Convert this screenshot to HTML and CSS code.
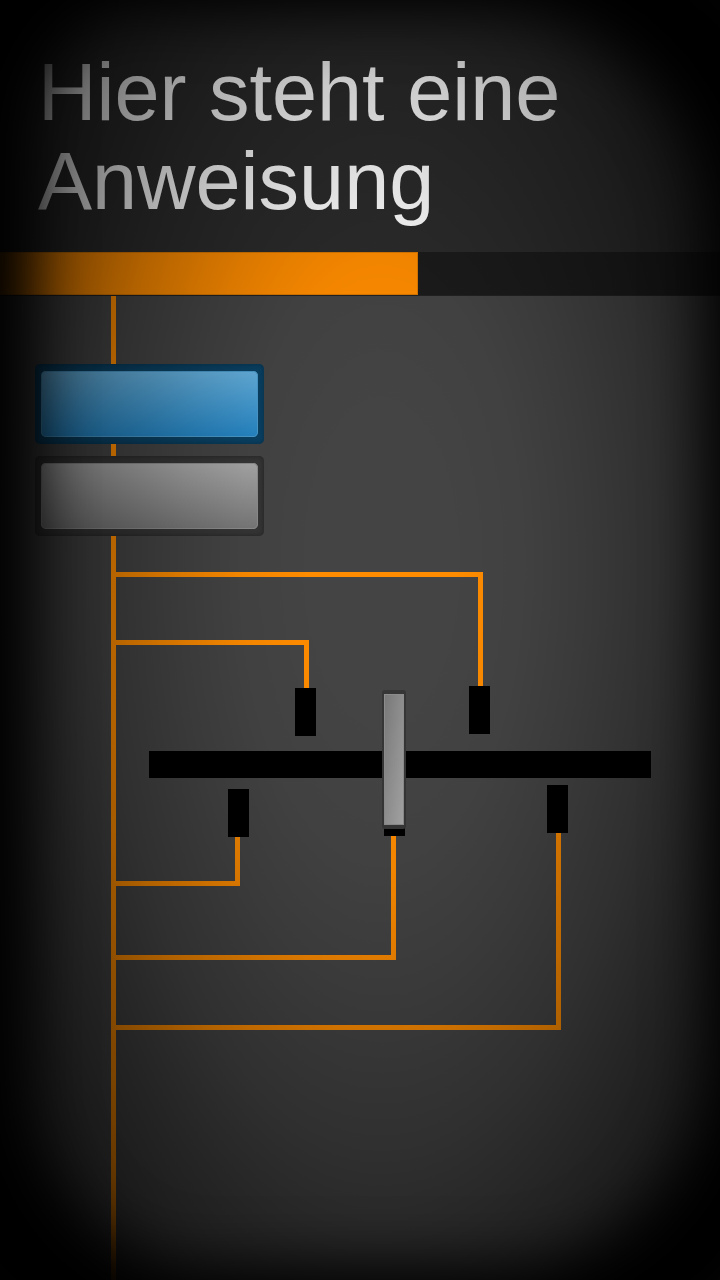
FILE: index.html
```html
<!DOCTYPE html>
<html lang="de">
<head>
<meta charset="utf-8">
<meta name="viewport" content="width=device-width, initial-scale=1">
<title>Anweisung</title>
<link rel="stylesheet" href="styles.css">
</head>
<body>
<div class="screen">
  <header class="header">
    <h1 class="title">Hier steht eine Anweisung</h1>
  </header>
  <progress class="timer" value="58" max="100" aria-label="Zeit"></progress>
  <main class="board">
    <svg class="wires" viewBox="0 0 720 984" preserveAspectRatio="none" aria-hidden="true">
      <g fill="none" stroke="#ff8c00" stroke-width="5">
        <path d="M113.500 0V984"/>
        <path d="M113 278.500H480.500V390"/>
        <path d="M113 346.500H306.500V392"/>
        <path d="M113 587.500H237.500V540"/>
        <path d="M113 661.500H393.500V539"/>
        <path d="M113 731.500H558.500V536"/>
      </g>
      <g fill="#000">
        <rect x="469" y="390" width="21" height="48"/>
        <rect x="295" y="392" width="21" height="48"/>
        <rect x="228" y="493" width="21" height="48"/>
        <rect x="384" y="492" width="21" height="48"/>
        <rect x="547" y="489" width="21" height="48"/>
      </g>
    </svg>
    <div class="buttons">
      <button class="button button-blue" type="button" aria-label="Blau"><span class="face"></span></button>
      <button class="button button-gray" type="button" aria-label="Grau"><span class="face"></span></button>
    </div>
    <div class="slider-row">
      <input class="slider" type="range" min="0" max="80" value="39" aria-label="Stufe">
    </div>
  </main>
  <div class="vignette"></div>
</div>
</body>
</html>
```

FILE: styles.css
```css
* {
  box-sizing: border-box;
}

body {
  margin: 0;
  background: #000;
  font-family: "Liberation Sans", Arial, sans-serif;
}

.screen {
  position: relative;
  display: flex;
  flex-direction: column;
  min-height: 100vh;
  overflow: hidden;
  background: #444;
}

.header {
  padding: 48px 38px 26px;
  background: #2b2b2b;
}

.title {
  margin: 0;
  color: #fff;
  font-size: 81px;
  font-weight: 400;
  line-height: 89px;
}

.timer {
  appearance: none;
  display: block;
  width: 100%;
  height: 44px;
  border: 0;
  background: #1b1b1b;
}

.timer::-webkit-progress-bar {
  background: #1b1b1b;
  border-bottom: 1px solid #222;
}

.timer::-webkit-progress-value {
  background: #ff8c00;
  border: 1px solid #d87700;
  border-left: 0;
}

.board {
  position: relative;
  flex: 1;
  padding-top: 68px;
}

.wires {
  position: absolute;
  inset: 0;
  width: 100%;
  height: 984px;
}

.buttons {
  position: relative;
  display: flex;
  flex-direction: column;
  gap: 12px;
  width: 264px;
  padding-left: 35px;
}

.button {
  display: flex;
  height: 80px;
  padding: 7px 6px;
  border: 0;
  border-radius: 5px;
}

.face {
  flex: 1;
  align-self: stretch;
  border-radius: 5px;
}

.button-blue {
  background: #0a4163;
  box-shadow: inset 0 0 4px #07304a;
}

.button-blue .face {
  background: linear-gradient(#66b2e0, #2485c4);
  box-shadow: inset 0 0 0 1px #4b9acb;
}

.button-gray {
  background: #353535;
  box-shadow: inset 0 0 4px #252525;
}

.button-gray .face {
  background: linear-gradient(#a8a8a8, #787878);
  box-shadow: inset 0 0 0 1px #8c8c8c;
}

.slider-row {
  position: relative;
  display: grid;
  grid-template-columns: 149fr 502fr 69fr;
  margin-top: 154px;
}

.slider {
  appearance: none;
  grid-column: 2;
  width: 100%;
  height: 139px;
  margin: 0;
  background: linear-gradient(#000, #000) 0 61px / 100% 27px no-repeat;
}

.slider::-webkit-slider-thumb {
  appearance: none;
  width: 24px;
  height: 139px;
  border: solid #363636;
  border-width: 4px 2px;
  border-radius: 3px;
  background: linear-gradient(100deg, #777, #a8a8a8) padding-box, #363636;
  box-shadow: inset 0 0 0 1px #8c8c8c;
}

.vignette {
  position: absolute;
  inset: 0;
  overflow: hidden;
  pointer-events: none;
  background: radial-gradient(ellipse 62% 74% at 53% 44%, transparent 15%, rgba(0, 0, 0, 0.05) 32%, rgba(0, 0, 0, 0.15) 45%, rgba(0, 0, 0, 0.3) 62%, rgba(0, 0, 0, 0.47) 76%, rgba(0, 0, 0, 0.62) 90%, rgba(0, 0, 0, 0.7) 100%);
}

.vignette::after {
  content: "";
  position: absolute;
  inset: -120px;
  border: 132px solid #000;
  border-left-width: 150px;
  border-radius: 250px 350px 340px 320px;
  filter: blur(30px);
}
```
